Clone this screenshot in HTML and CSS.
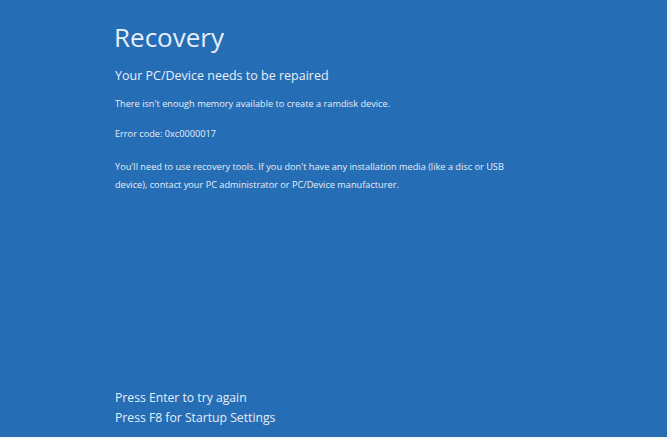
FILE: index.html
```html
<!DOCTYPE html>
<html>
<head>
<meta charset="utf-8">
<link rel="stylesheet" href="styles.css">
</head>
<body>
<div class="screen">
  <div class="top">
    <h1 class="title">Recovery</h1>
    <h2 class="subtitle">Your PC/Device needs to be repaired</h2>
    <p class="msg m1">There isn't enough memory available to create a ramdisk device.</p>
    <p class="msg m2">Error code: 0xc0000017</p>
    <p class="msg m3">You'll need to use recovery tools. If you don't have any installation media (like a disc or USB<br>device), contact your PC administrator or PC/Device manufacturer.</p>
  </div>
  <div class="bottom">
    <div class="opt">Press Enter to try again</div>
    <div class="opt">Press F8 for Startup Settings</div>
  </div>
</div>
</body>
</html>
```
FILE: styles.css
```css
html, body { margin: 0; padding: 0; background: #f4f6f8; }
body { width: 671px; height: 439px; overflow: hidden; }
.screen {
  width: 667px; height: 437px; background: #256db5;
  color: #e6eef8; font-family: "Open Sans", "Noto Sans", sans-serif;
  display: flex; flex-direction: column; justify-content: space-between;
  padding: 0 0 0 114px; box-sizing: border-box;
}
.top { padding-top: 18px; }
.title { margin: 0; font-weight: 400; font-size: 26px; line-height: 38px; }
.subtitle { margin: 11px 0 0 1px; font-weight: 400; font-size: 12.5px; line-height: 18px; }
.msg { margin: 0 0 0 1px; font-size: 9.2px; line-height: 17px; }
.m1 { margin-top: 10px; }
.m2 { margin-top: 13px; }
.m3 { margin-top: 16px; line-height: 18px; }
.bottom { padding: 0 0 9px 1px; }
.opt { font-size: 12.2px; line-height: 20px; }
```
